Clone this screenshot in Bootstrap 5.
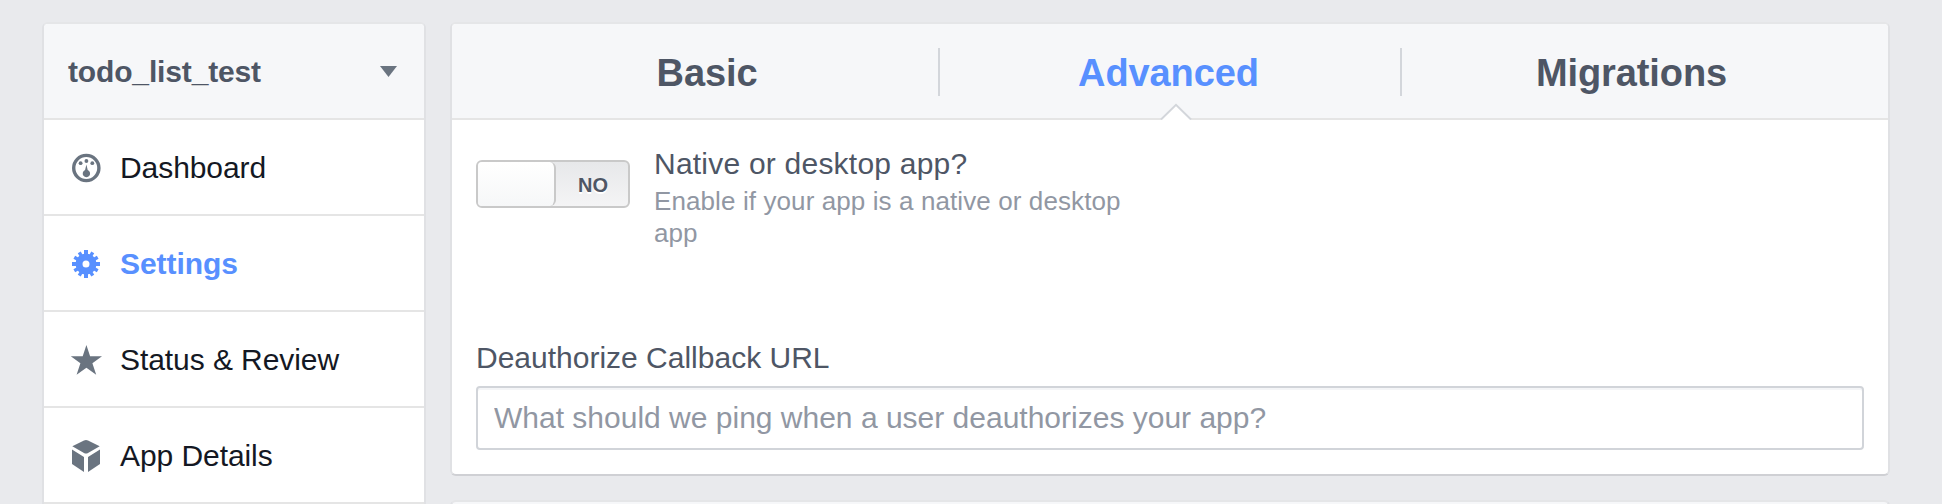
<!DOCTYPE html>
<html lang="en">
<head>
<meta charset="utf-8">
<title>App settings</title>
<meta name="viewport" content="width=device-width, initial-scale=1">
<link href="https://cdn.jsdelivr.net/npm/bootstrap@5.3.0/dist/css/bootstrap.min.css" rel="stylesheet">
<style>
  body {
    background: #e9eaed;
    color: #4e5665;
    font-family: "Liberation Sans", Arial, sans-serif;
    font-size: 30px;
    line-height: 36px;
    height: 504px;
    overflow: hidden;
  }
  .page { padding: 22px 52px 0 42px; gap: 24px; height: 504px; overflow: hidden; }
  .panel {
    border: 2px solid #e0e1e4;
    border-top-color: #e5e6e8;
    border-radius: 6px;
    background: #fff;
  }
  .sidebar { width: 384px; height: 600px; }
  .sidebar .entry {
    height: 96px;
    border-bottom: 2px solid #e5e5e5;
    padding: 0 26px;
    gap: 18px;
    color: #141823;
    text-decoration: none;
    letter-spacing: -.07px;
  }
  .sidebar .entry span { padding-top: 2px; }
  .sidebar .entry.app-name {
    background: #f6f7f9;
    color: #4e5665;
    padding: 0 27px 0 24px;
    border-radius: 4px 4px 0 0;
    letter-spacing: -.15px;
  }
  .sidebar .entry.current { color: #5890ff; }
  .sidebar svg { display: block; flex: none; overflow: visible; fill: #6a7480; }
  .sidebar .current svg { fill: #5890ff; }
  .content-col { width: 1440px; gap: 24px; }
  .settings-panel { height: 454px; border-bottom-color: #cfd0d4; }
  .tabs {
    height: 96px;
    padding: 2px 24px 0;
    grid-template-columns: 462px 462px 464px;
    align-items: center;
    background: #f6f7f9;
    border-bottom: 2px solid #e5e5e5;
    border-radius: 4px 4px 0 0;
  }
  .tabs .tab {
    height: 48px;
    padding-top: 3px;
    font-size: 38px;
    line-height: 44px;
    letter-spacing: -.1px;
    color: #4e5665;
    text-decoration: none;
  }
  .tabs .tab + .tab { border-left: 2px solid #d3d6db; padding-right: 3px; }
  .tabs .tab.current { color: #5890ff; }
  .tick { position: absolute; left: 708px; top: 79px; }
  .fields { padding: 24px 24px 0; }
  .native-row { gap: 24px; height: 196px; }
  .switch-box {
    width: 154px;
    height: 48px;
    margin-top: 16px;
    border: 2px solid #c9c9c9;
    border-radius: 6px;
    background: linear-gradient(#e7e8ea, #f4f4f5);
    font-size: 20px;
    line-height: 24px;
    text-shadow: 0 2px 0 #fff;
  }
  .knob {
    width: 78px;
    border-right: 2px solid #c9c9c9;
    border-radius: 4px 6px 6px 4px;
    background: linear-gradient(#fff, #f6f7f8);
  }
  .switch-label { padding: 1px 0 0 2px; }
  .native-text { width: 490px; padding-top: 2px; letter-spacing: .22px; }
  .hint {
    margin-top: 3px;
    font-size: 26px;
    line-height: 32px;
    letter-spacing: .1px;
    color: #9197a3;
  }
  .url-label { margin-bottom: 10px; }
  .url-input.form-control {
    height: 64px;
    padding: 0 16px;
    border: 2px solid #d1d4d9;
    border-radius: 4px;
    box-shadow: inset 0 2px 0 #f4f5f7;
    font-size: 30px;
    line-height: 36px;
  }
  .url-input::placeholder { color: #9197a3; opacity: 1; }
  .next-panel { height: 100px; flex: none; background: #f6f7f9; }
</style>
</head>
<body>
<div class="page d-flex align-items-start">
  <nav class="panel sidebar flex-shrink-0">
    <a href="#" class="entry app-name d-flex align-items-center justify-content-between fw-bold">
      <span>todo_list_test</span>
      <svg width="17" height="11" viewBox="0 0 17 11"><path d="M0 0h17L8.5 11z"/></svg>
    </a>
    <a href="#" class="entry d-flex align-items-center">
      <svg width="32" height="32" viewBox="0 0 32 32">
        <circle cx="16.3" cy="17" r="12.6" fill="none" stroke="#6a7480" stroke-width="3.4"/>
        <circle cx="10.6" cy="12.2" r="1.9"/><circle cx="16.4" cy="10" r="1.9"/><circle cx="22.3" cy="12.2" r="1.9"/>
        <path d="M16.4 13.5l1.3 5.6a3.7 3.7 0 1 1-2.600 0z"/>
      </svg>
      <span>Dashboard</span>
    </a>
    <a href="#" class="entry current d-flex align-items-center fw-bold">
      <svg width="32" height="32" viewBox="0 0 32 32">
        <g fill="none" stroke="#5890ff">
          <circle cx="16" cy="17" r="7" stroke-width="7"/>
          <path stroke-width="4" d="M16 3v6M16 25v6M2 17h6M24 17h6"/>
          <path stroke-width="3.4" d="M9.25 5.3l3 5.2M22.75 5.3l-3 5.2M9.25 28.7l3-5.2M22.75 28.7l-3-5.2M4.3 10.25l5.2 3M27.7 10.25l-5.2 3M4.3 23.75l5.2-3M27.7 23.75l-5.2-3"/>
        </g>
      </svg>
      <span>Settings</span>
    </a>
    <a href="#" class="entry d-flex align-items-center">
      <svg width="32" height="32" viewBox="0 0 32 32"><path d="M16.400 2l3.700 11.300H32l-9.600 7 3.800 11.400-9.800-7-9.800 7 3.800-11.400-9.600-7h11.900z"/></svg>
      <span>Status &amp; Review</span>
    </a>
    <a href="#" class="entry d-flex align-items-center">
      <svg width="32" height="32" viewBox="0 0 32 32"><path d="M2.300 7.200L14 1.500q2-.9 4 0l11.700 5.700L18 14q-2 1.200-4 0zM2 10.500l12 7.600V33L2 25zM30 10.500l-12 7.600V33l12-8z"/></svg>
      <span>App Details</span>
    </a>
  </nav>

  <main class="content-col d-flex flex-column flex-shrink-0">
    <section class="panel settings-panel flex-shrink-0">
      <div class="tabs d-grid position-relative fw-bold text-center">
        <a href="#" class="tab">Basic</a>
        <a href="#" class="tab current">Advanced</a>
        <a href="#" class="tab">Migrations</a>
        <svg class="tick" width="32" height="17" viewBox="0 0 32 17"><path d="M1 17L16 2l15 15z" fill="#fff"/><path d="M1 16.500L16 1.800l15 14.700" fill="none" stroke="#d3d6db" stroke-width="2"/></svg>
      </div>
      <div class="fields">
        <div class="native-row d-flex align-items-start">
          <div class="switch-box d-flex flex-shrink-0" role="switch" aria-checked="false">
            <span class="knob"></span>
            <span class="switch-label flex-fill d-flex align-items-center justify-content-center fw-bold">NO</span>
          </div>
          <div class="native-text">
            <div>Native or desktop app?</div>
            <div class="hint">Enable if your app is a native or desktop app</div>
          </div>
        </div>
        <label class="url-label d-block" for="deauth">Deauthorize Callback URL</label>
        <input id="deauth" type="text" class="url-input form-control" placeholder="What should we ping when a user deauthorizes your app?">
      </div>
    </section>
    <section class="panel next-panel"></section>
  </main>
</div>
</body>
</html>
